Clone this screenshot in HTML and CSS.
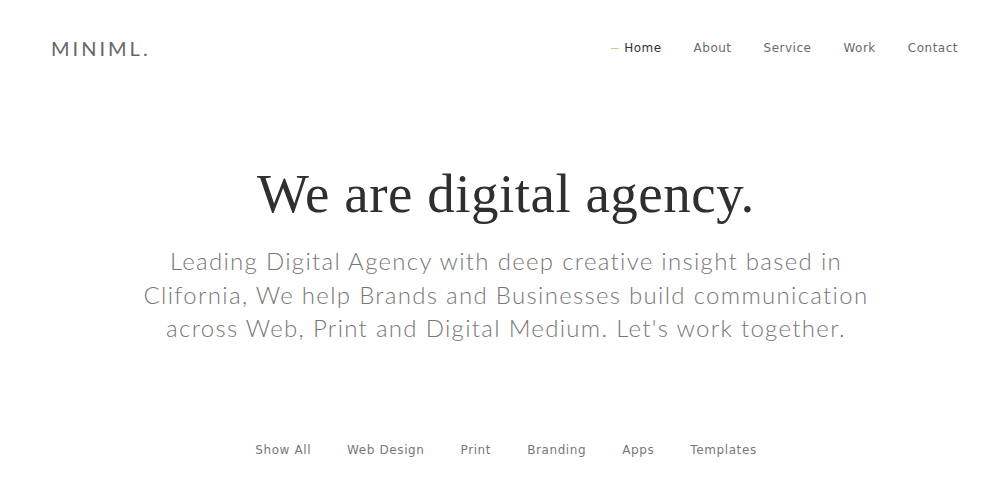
FILE: index.html
```html
<!DOCTYPE html>
<html lang="en">
<head>
<meta charset="utf-8">
<title>MINIML.</title>
<link rel="stylesheet" href="styles.css">
</head>
<body>
<header class="header">
  <a class="logo" href="#">MINIML.</a>
  <nav class="nav">
    <a class="nav-link active" href="#">Home</a>
    <a class="nav-link" href="#">About</a>
    <a class="nav-link" href="#">Service</a>
    <a class="nav-link" href="#">Work</a>
    <a class="nav-link" href="#">Contact</a>
  </nav>
</header>
<main class="hero">
  <h1 class="title">We are digital agency.</h1>
  <p class="lead">Leading Digital Agency with deep creative insight based in Clifornia, We help Brands and Businesses build communication across Web, Print and Digital Medium. Let's work together.</p>
</main>
<nav class="filters">
  <a class="filter" href="#">Show All</a>
  <a class="filter" href="#">Web Design</a>
  <a class="filter" href="#">Print</a>
  <a class="filter" href="#">Branding</a>
  <a class="filter" href="#">Apps</a>
  <a class="filter" href="#">Templates</a>
</nav>
</body>
</html>
```
FILE: styles.css
```css
* { box-sizing: border-box; }
html, body { margin: 0; padding: 0; background: #fff; }
body {
  width: 1000px;
  height: 500px;
  overflow: hidden;
  font-family: "DejaVu Sans", sans-serif;
  color: #555;
}
a { text-decoration: none; color: inherit; }

.header {
  display: flex;
  justify-content: space-between;
  align-items: center;
  height: 95px;
  padding: 0 42px 0 51px;
}
.logo {
  font-family: "Lato", sans-serif;
  font-size: 20px;
  letter-spacing: 3px;
  color: #666;
  font-weight: 400;
}
.nav {
  display: flex;
  gap: 32px;
  font-family: "DejaVu Sans", sans-serif;
  font-size: 12px;
  letter-spacing: 0.5px;
}
.nav-link { color: #6a6a6a; position: relative; }
.nav-link.active { color: #333; }
.nav-link.active::before {
  content: "";
  position: absolute;
  left: -13px;
  top: 50%;
  width: 8px;
  height: 1px;
  background: #c8d47f;
}

.hero {
  display: flex;
  flex-direction: column;
  align-items: center;
  text-align: center;
  padding-top: 64px;
  padding-left: 12px;
}
.title {
  margin: 0;
  font-family: "Liberation Serif", serif;
  font-weight: 400;
  font-size: 55px;
  line-height: 70px;
  color: #2f2f2f;
  letter-spacing: 0.5px;
}
.lead {
  margin: 15px 0 0;
  width: 760px;
  font-family: "Lato", sans-serif;
  font-weight: 300;
  font-size: 24px;
  line-height: 33.5px;
  letter-spacing: 1.3px;
  color: #777;
}

.filters {
  display: flex;
  justify-content: center;
  gap: 36px;
  margin-top: 98px;
  padding-left: 12px;
  font-family: "DejaVu Sans", sans-serif;
  font-size: 12px;
  letter-spacing: 0.6px;
  color: #777;
}
```
